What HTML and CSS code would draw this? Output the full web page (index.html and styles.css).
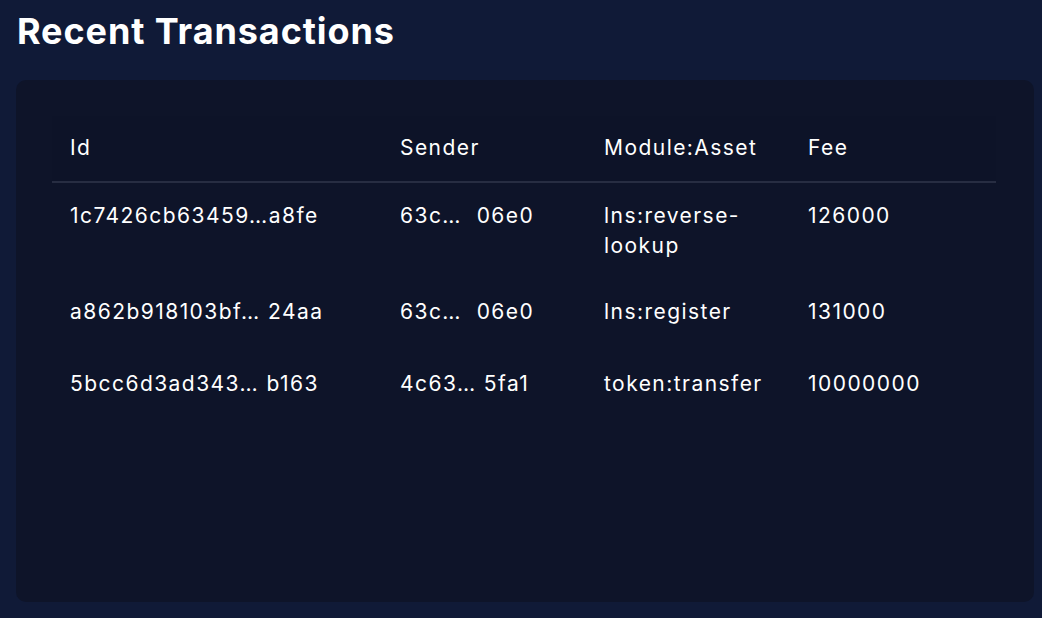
FILE: index.html
```html
<!DOCTYPE html>
<html lang="en">
<head>
<meta charset="utf-8">
<title>Recent Transactions</title>
<link rel="stylesheet" href="styles.css">
</head>
<body>
<main class="page">
  <h1 class="title">Recent Transactions</h1>
  <section class="card">
    <div class="table-wrap">
      <table class="tx-table">
        <colgroup>
          <col class="col-id">
          <col class="col-sender">
          <col class="col-module">
          <col class="col-fee">
        </colgroup>
        <thead>
          <tr>
            <th>Id</th>
            <th>Sender</th>
            <th>Module:Asset</th>
            <th>Fee</th>
          </tr>
        </thead>
        <tbody>
          <tr>
            <td>1c7426cb63459…a8fe</td>
            <td>63c…&nbsp;&nbsp;06e0</td>
            <td>lns:reverse-lookup</td>
            <td>126000</td>
          </tr>
          <tr>
            <td>a862b918103bf…&nbsp;24aa</td>
            <td>63c…&nbsp;&nbsp;06e0</td>
            <td>lns:register</td>
            <td>131000</td>
          </tr>
          <tr>
            <td>5bcc6d3ad343…&nbsp;b163</td>
            <td>4c63…&nbsp;5fa1</td>
            <td>token:transfer</td>
            <td>10000000</td>
          </tr>
        </tbody>
      </table>
    </div>
  </section>
</main>
</body>
</html>
```

FILE: styles.css
```css
* { box-sizing: border-box; }

html, body {
  margin: 0;
  padding: 0;
  background: #101a37;
  color: #ffffff;
  font-family: "Inter", "Liberation Sans", sans-serif;
}

.page {
  width: 1042px;
  height: 618px;
  padding: 0 8px 16px 16px;
  display: flex;
  flex-direction: column;
}

.title {
  margin: 10px 0 0 1px;
  height: 70px;
  font-size: 36px;
  line-height: 42px;
  font-weight: 700;
  letter-spacing: 0.9px;
}

.card {
  flex: 1;
  width: 1018px;
  background: #0e1429;
  border-radius: 10px;
  padding: 36px 38px 36px 36px;
  display: flex;
  flex-direction: column;
}

.table-wrap {
  flex: 1;
  background: #0e1429;
}

.tx-table {
  width: 944px;
  border-collapse: collapse;
  table-layout: fixed;
  font-size: 21px;
  line-height: 30px;
  letter-spacing: 1.45px;
}

.tx-table thead {
  background: #0d1328;
}

.col-id { width: 330px; }
.col-sender { width: 204px; }
.col-module { width: 204px; }
.col-fee { width: 206px; }

.tx-table th {
  text-align: left;
  font-weight: 400;
  padding: 17px 18px 18px;
  border-bottom: 2px solid #272d42;
}

.tx-table td {
  vertical-align: top;
  padding: 18px 18px 24px;
}

.tx-table tbody tr:first-child td {
  padding-bottom: 18px;
}
```
